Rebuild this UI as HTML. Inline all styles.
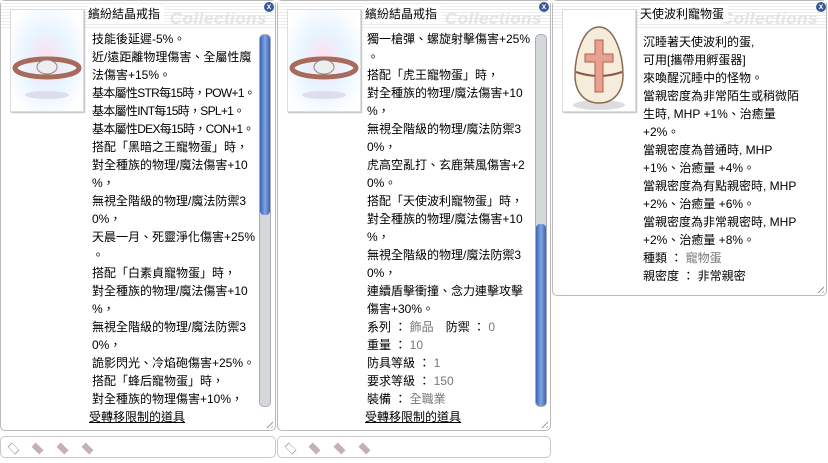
<!DOCTYPE html>
<html><head><meta charset="utf-8"><style>
*{margin:0;padding:0;box-sizing:border-box}
body{width:828px;height:463px;background:#fff;position:relative;overflow:hidden;font-family:"Liberation Sans","Noto Sans CJK TC","WenQuanYi Zen Hei",sans-serif;font-size:12px;color:#000}
.p{position:absolute;border:1px solid #b8b8b8;border-radius:5px;background:#fff}
.hd{position:absolute;left:0;right:0;top:0;height:27px;background:repeating-linear-gradient(#fff 0 2px,#ececec 2px 3px)}
.wm{position:absolute;right:8px;top:8px;font:italic bold 17px "Liberation Sans",sans-serif;color:#e4e4e4;letter-spacing:0.5px}
.ttl{position:absolute;top:4px;font-size:12px;background:#fff;padding-right:4px}
.x{position:absolute;top:1px;width:10px;height:10px;border-radius:50%;background:#3a5a9a;color:#fff;font-size:8px;line-height:10px;text-align:center;font-weight:bold}
.img{position:absolute;left:9px;top:8px;width:74px;height:103px;background:#fff;border:1px solid #ddd;box-shadow:1px 1px 1px #bbb}
.t{position:absolute;line-height:18px;white-space:nowrap}
.t div{height:18px}
.n{letter-spacing:-0.7px}
.g{color:#777}
.u{text-decoration:underline}
.sb{position:absolute;width:12px;background:#d5d8d8;border:1px solid #aab;border-radius:5px}
.th{position:absolute;left:0;width:10px;background:linear-gradient(90deg,#3c64b4,#7ea4e4,#3c64b4);border-radius:4px}
.bar{position:absolute;top:436px;height:22px;border:1px solid #c8c8c8;border-radius:5px;background:#fff}
.d{position:absolute;top:6px;width:11px;height:11px;transform:rotate(45deg) scaleY(.55);background:#c5b0b6}
.grip{position:absolute;right:2px;bottom:2px;width:9px;height:9px;background:repeating-linear-gradient(135deg,transparent 0 2px,#999 2px 3px);clip-path:polygon(100% 0,100% 100%,0 100%)}
</style></head><body>

<!-- Panel 1 -->
<div class="p" style="left:0;top:0;width:276px;height:431px">
 <div class="hd"></div><div class="wm">Collections</div>
 <div class="ttl" style="left:87px">繽紛結晶戒指</div>
 <div class="x" style="left:263px">x</div>
 <div class="img"><svg width="72" height="101" viewBox="0 0 72 101"><defs><radialGradient id="r1" cx=".5" cy=".5" r=".6"><stop offset="0" stop-color="#fde"/><stop offset=".5" stop-color="#e8f4ff"/><stop offset="1" stop-color="#fff"/></radialGradient></defs><rect width="72" height="101" fill="url(#r1)"/><ellipse cx="36" cy="58" rx="32" ry="9" fill="none" stroke="#a86a5a" stroke-width="5"/><ellipse cx="36" cy="57" rx="10" ry="7" fill="#eee" stroke="#888"/><ellipse cx="36" cy="85" rx="22" ry="4" fill="#dde"/></svg></div>
 <div class="t" style="left:91px;top:29px">
  <div>技能後延遲-5%。</div><div>近/遠距離物理傷害、全屬性魔</div><div>法傷害+15%。</div><div class="n">基本屬性STR每15時，POW+1。</div><div class="n">基本屬性INT每15時，SPL+1。</div><div class="n">基本屬性DEX每15時，CON+1。</div><div>搭配「黑暗之王寵物蛋」時，</div><div>對全種族的物理/魔法傷害+10</div><div>%，</div><div>無視全階級的物理/魔法防禦3</div><div>0%，</div><div>天晨一月、死靈淨化傷害+25%</div><div>。</div><div>搭配「白素貞寵物蛋」時，</div><div>對全種族的物理/魔法傷害+10</div><div>%，</div><div>無視全階級的物理/魔法防禦3</div><div>0%，</div><div>詭影閃光、冷焰砲傷害+25%。</div><div>搭配「蜂后寵物蛋」時，</div><div>對全種族的物理傷害+10%，</div><div class="u" style="margin-left:-3px">受轉移限制的道具</div>
 </div>
 <div class="sb" style="left:258px;top:33px;height:373px"><div class="th" style="top:0;height:180px"></div></div>
 <div class="grip"></div>
</div>
<div class="bar" style="left:0;width:276px"><div class="d" style="left:7px;background:#fff;border:1px solid #aaa"></div><div class="d" style="left:31px"></div><div class="d" style="left:56px"></div><div class="d" style="left:81px"></div></div>

<!-- Panel 2 -->
<div class="p" style="left:277px;top:0;width:274px;height:431px">
 <div class="hd"></div><div class="wm">Collections</div>
 <div class="ttl" style="left:87px">繽紛結晶戒指</div>
 <div class="x" style="left:261px">x</div>
 <div class="img"><svg width="72" height="101" viewBox="0 0 72 101"><defs><radialGradient id="r2" cx=".5" cy=".5" r=".6"><stop offset="0" stop-color="#fde"/><stop offset=".5" stop-color="#e8f4ff"/><stop offset="1" stop-color="#fff"/></radialGradient></defs><rect width="72" height="101" fill="url(#r2)"/><ellipse cx="36" cy="58" rx="32" ry="9" fill="none" stroke="#a86a5a" stroke-width="5"/><ellipse cx="36" cy="57" rx="10" ry="7" fill="#eee" stroke="#888"/><ellipse cx="36" cy="85" rx="22" ry="4" fill="#dde"/></svg></div>
 <div class="t" style="left:89px;top:29px">
  <div>獨一槍彈、螺旋射擊傷害+25%</div><div>。</div><div>搭配「虎王寵物蛋」時，</div><div>對全種族的物理/魔法傷害+10</div><div>%，</div><div>無視全階級的物理/魔法防禦3</div><div>0%，</div><div>虎高空亂打、玄鹿葉風傷害+2</div><div>0%。</div><div>搭配「天使波利寵物蛋」時，</div><div>對全種族的物理/魔法傷害+10</div><div>%，</div><div>無視全階級的物理/魔法防禦3</div><div>0%，</div><div>連續盾擊衝撞、念力連擊攻擊</div><div>傷害+30%。</div><div>系列 ： <span class="g">飾品</span>　防禦 ： <span class="g">0</span></div><div>重量 ： <span class="g">10</span></div><div>防具等級 ： <span class="g">1</span></div><div>要求等級 ： <span class="g">150</span></div><div>裝備 ： <span class="g">全職業</span></div><div class="u" style="margin-left:-2px">受轉移限制的道具</div>
 </div>
 <div class="sb" style="left:257px;top:33px;height:373px"><div class="th" style="top:189px;height:182px"></div></div>
 <div class="grip"></div>
</div>
<div class="bar" style="left:277px;width:274px"><div class="d" style="left:7px;background:#fff;border:1px solid #aaa"></div><div class="d" style="left:31px"></div><div class="d" style="left:56px"></div><div class="d" style="left:81px"></div></div>

<!-- Panel 3 -->
<div class="p" style="left:552px;top:0;width:275px;height:296px">
 <div class="hd"></div><div class="wm">Collections</div>
 <div class="ttl" style="left:87px">天使波利寵物蛋</div>
 <div class="x" style="left:263px">x</div>
 <div class="img"><svg width="72" height="101" viewBox="0 0 72 101"><ellipse cx="36" cy="95" rx="26" ry="5" fill="#ddd"/><path d="M36 17 C52 17 60 45 60 65 C60 83 50 93 36 93 C22 93 12 83 12 65 C12 45 20 17 36 17Z" fill="#f6ecdc" stroke="#8a6a50" stroke-width="1.5"/><path d="M13 62 Q36 70 59 62" fill="none" stroke="#8a5a40" stroke-width="2"/><path d="M32 30h8v14h10v8h-10v30h-8v-30h-10v-8h10z" fill="#e8a090" stroke="#b06050"/></svg></div>
 <div class="t" style="left:90px;top:32px">
  <div>沉睡著天使波利的蛋,</div><div>可用[攜帶用孵蛋器]</div><div>來喚醒沉睡中的怪物。</div><div>當親密度為非常陌生或稍微陌</div><div>生時, MHP +1%、治癒量</div><div>+2%。</div><div>當親密度為普通時, MHP</div><div>+1%、治癒量 +4%。</div><div>當親密度為有點親密時, MHP</div><div>+2%、治癒量 +6%。</div><div>當親密度為非常親密時, MHP</div><div>+2%、治癒量 +8%。</div><div>種類 ： <span class="g">寵物蛋</span></div><div>親密度 ： 非常親密</div>
 </div>
 <div class="grip"></div>
</div>
</body></html>
